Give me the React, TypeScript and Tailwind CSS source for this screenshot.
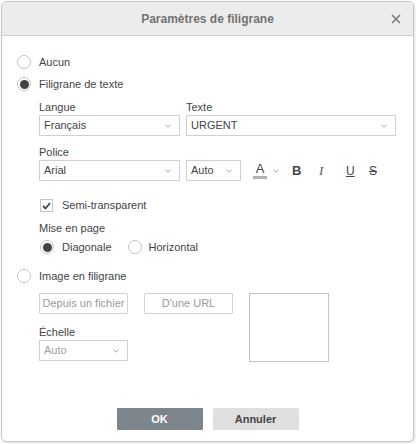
import React from "react";

const Chevron = () => (
  <svg width="6" height="4" viewBox="0 0 6 4" className="shrink-0">
    <path d="M0.5 0.8 L3 3.2 L5.5 0.8" fill="none" stroke="#9a9a9a" strokeWidth="0.9" />
  </svg>
);

const Radio = ({ checked }: { checked?: boolean }) => (
  <span className="w-[14px] h-[14px] rounded-full border border-[#c4c4c4] bg-white flex items-center justify-center shrink-0">
    {checked && <span className="w-[9px] h-[9px] rounded-full bg-[#444444]" />}
  </span>
);

const Select = ({ value, w, disabled }: { value: string; w: string; disabled?: boolean }) => (
  <div className={`${w} h-[21px] border border-[#cfcfcf] bg-white flex items-center justify-between pl-[4px] pr-[8px]`}>
    <span className={disabled ? "text-[#a0a0a0]" : "text-[#444444]"}>{value}</span>
    <Chevron />
  </div>
);

export default function App() {
  return (
    <div
      className="w-[416px] h-[444px] bg-white pl-[1px] pt-[1px] text-[11px] text-[#444444]"
      style={{ fontFamily: '"Liberation Sans", Arial, sans-serif' }}
    >
      <div className="w-[413px] h-[441px] border border-[#c6c6c6] rounded-[5px] shadow-[1px_1px_3px_rgba(0,0,0,0.12)] flex flex-col overflow-hidden bg-white">
        <div className="h-[34px] shrink-0 bg-[#ececec] border-b border-[#cbcbcb] flex items-center justify-center relative">
          <span className="text-[12px] font-bold text-[#737373]">Paramètres de filigrane</span>
          <svg width="10" height="10" viewBox="0 0 10 10" className="absolute right-[12px] top-[12px]">
            <path d="M1 1 L9 9 M9 1 L1 9" stroke="#7a7a7a" strokeWidth="1.6" />
          </svg>
        </div>
        <div className="flex-1 pl-[15px] pt-[19px] flex flex-col">
          <div className="h-[14px] flex items-center gap-[8px]">
            <Radio />
            <span>Aucun</span>
          </div>
          <div className="h-[14px] mt-[8px] flex items-center gap-[8px]">
            <Radio checked />
            <span>Filigrane de texte</span>
          </div>
          <div className="ml-[22px] flex flex-col">
            <div className="flex gap-[6px] mt-[10px]">
              <div className="flex flex-col">
                <span className="h-[13px] leading-[13px] mb-[1px]">Langue</span>
                <Select value="Français" w="w-[141px]" />
              </div>
              <div className="flex flex-col">
                <span className="h-[13px] leading-[13px] mb-[1px]">Texte</span>
                <Select value="URGENT" w="w-[210px]" />
              </div>
            </div>
            <span className="h-[13px] leading-[13px] mt-[10px] mb-[1px]">Police</span>
            <div className="flex items-center">
              <Select value="Arial" w="w-[141px]" />
              <div className="ml-[6px]">
                <Select value="Auto" w="w-[55px]" />
              </div>
              <div className="ml-[12px] flex flex-col items-center w-[14px]">
                <span className="text-[13px] leading-[13px] text-[#444444]">A</span>
                <span className="w-[14px] h-[3px] bg-[#b5b5b5] mt-[1px]" />
              </div>
              <div className="ml-[6px]">
                <Chevron />
              </div>
              <span className="ml-[13px] w-[8px] text-[13px] font-bold text-[#444444]">B</span>
              <span
                className="ml-[19px] w-[7px] text-[13px] italic text-[#555555]"
                style={{ fontFamily: '"Liberation Serif", serif' }}
              >
                I
              </span>
              <span className="ml-[20px] w-[9px] text-[12px] underline text-[#444444]">U</span>
              <span className="ml-[13px] w-[10px] text-[12px] line-through text-[#444444] text-center">S</span>
            </div>
            <div className="h-[13px] mt-[18px] flex items-center gap-[9px] ml-[1px]">
              <span className="w-[13px] h-[13px] border border-[#c4c4c4] bg-white flex items-center justify-center">
                <svg width="9" height="8" viewBox="0 0 9 8">
                  <path d="M1 4 L3.5 6.5 L8 1" fill="none" stroke="#444444" strokeWidth="1.8" />
                </svg>
              </span>
              <span>Semi-transparent</span>
            </div>
            <span className="h-[13px] leading-[13px] mt-[10px]">Mise en page</span>
            <div className="h-[14px] mt-[5px] flex items-center ml-[1px]">
              <Radio checked />
              <span className="ml-[8px]">Diagonale</span>
              <span className="ml-[16px]">
                <Radio />
              </span>
              <span className="ml-[7px]">Horizontal</span>
            </div>
          </div>
          <div className="h-[14px] mt-[15px] flex items-center gap-[8px]">
            <Radio />
            <span>Image en filigrane</span>
          </div>
          <div className="ml-[22px] mt-[10px] flex gap-[16px]">
            <div className="flex flex-col">
              <div className="flex gap-[16px]">
                <div className="w-[89px] h-[21px] border border-[#d3d3d3] rounded-[1px] flex items-center justify-center text-[#9a9a9a]">
                  Depuis un fichier
                </div>
                <div className="w-[89px] h-[21px] border border-[#d3d3d3] rounded-[1px] flex items-center justify-center text-[#9a9a9a]">
                  D'une URL
                </div>
              </div>
              <span className="h-[13px] leading-[13px] mt-[12px] mb-[1px]">Échelle</span>
              <Select value="Auto" w="w-[89px]" disabled />
            </div>
            <div className="w-[80px] h-[69px] border border-[#c4c4c4]" />
          </div>
        </div>
        <div className="flex justify-center gap-[10px] pb-[11px]">
          <div className="w-[86px] h-[22px] bg-[#7d858c] text-white font-bold flex items-center justify-center rounded-[1px]">
            OK
          </div>
          <div className="w-[86px] h-[22px] bg-[#dfdfdf] text-[#444444] font-bold flex items-center justify-center rounded-[1px]">
            Annuler
          </div>
        </div>
      </div>
    </div>
  );
}
